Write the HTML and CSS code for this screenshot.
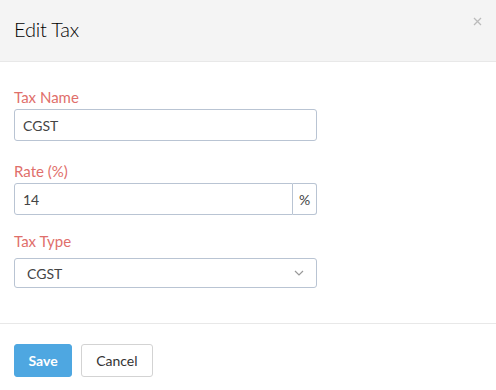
FILE: index.html
```html
<!DOCTYPE html>
<html lang="en">
<head>
    <meta charset="UTF-8">
    <meta name="viewport" content="width=device-width, initial-scale=1.0">
    <title>Edit Tax</title>
    <link rel="stylesheet" href="styles.css">
</head>
<body>
    <div class="modal">
        <div class="modal-header">
            <h1>Edit Tax</h1>
            <svg class="close" width="9" height="9" viewBox="0 0 9 9"><path d="M1 1l7 7M8 1l-7 7" stroke="#bbb" stroke-width="1.3"/></svg>
        </div>

        <div class="modal-body">
            <div class="form-group">
                <label for="tax-name">Tax Name</label>
                <input type="text" id="tax-name" value="CGST">
            </div>

            <div class="form-group">
                <label for="tax-rate">Rate (%)</label>
                <div class="input-group">
                    <input type="text" id="tax-rate" value="14">
                    <span class="addon">%</span>
                </div>
            </div>

            <div class="form-group type-group">
                <label for="tax-type">Tax Type</label>
                <div class="select">
                    <span>CGST</span>
                    <svg width="10" height="6" viewBox="0 0 10 6"><path d="M1 1l4 4 4-4" fill="none" stroke="#999" stroke-width="1.2"/></svg>
                </div>
            </div>
        </div>

        <div class="modal-footer">
            <button class="btn btn-primary">Save</button>
            <button class="btn">Cancel</button>
        </div>
    </div>
</body>
</html>
```

FILE: styles.css
```css
body {
    font-family: Lato, "Open Sans", Arial, sans-serif;
    margin: 0;
    background-color: white;
    color: #333;
}
.modal-header {
    position: relative;
    background-color: #f4f4f4;
    border-bottom: 1px solid #e8e8e8;
    padding: 17px 14px 0;
    box-sizing: border-box;
    height: 62px;
}
h1 {
    margin: 0;
    font-size: 20px;
    line-height: 24px;
    font-weight: 300;
    letter-spacing: -0.2px;
    color: #000;
}
.close {
    position: absolute;
    top: 17px;
    right: 14px;
}
.modal-body {
    padding: 26px 14px 35px;
}
.form-group {
    width: 303px;
    margin-bottom: 21px;
}
.form-group.type-group {
    margin-top: -4px;
    margin-bottom: 0;
}
label {
    display: block;
    margin-bottom: 3px;
    font-size: 15px;
    line-height: 18px;
    color: #df6f6b;
}
.type-group label {
    margin-bottom: 8px;
}
input[type="text"] {
    width: 100%;
    height: 32px;
    padding: 0 8px;
    border: 1px solid #b9c4d3;
    border-radius: 3px;
    box-sizing: border-box;
    font-family: inherit;
    font-size: 14px;
    color: #444;
}
.input-group {
    display: flex;
}
.input-group input[type="text"] {
    flex: 1;
    border-radius: 3px 0 0 3px;
}
.addon {
    width: 24px;
    height: 32px;
    box-sizing: border-box;
    border: 1px solid #b9c4d3;
    border-left: none;
    border-radius: 0 3px 3px 0;
    display: flex;
    align-items: center;
    justify-content: center;
    font-size: 14px;
    color: #444;
}
.select {
    height: 28px;
    padding: 0 12px;
    border: 1px solid #b9c4d3;
    border-radius: 3px;
    display: flex;
    align-items: center;
    justify-content: space-between;
    font-size: 14px;
    color: #444;
}
.modal-footer {
    border-top: 1px solid #e8e8e8;
    padding: 20px 14px;
    display: flex;
    gap: 9px;
}
.btn {
    height: 33px;
    padding: 0 14px;
    border: 1px solid #d3d3d3;
    border-radius: 3px;
    background-color: white;
    font-family: inherit;
    font-size: 14px;
    color: #333;
}
.btn-primary {
    padding: 0 13.5px;
    background-color: #4ea7e1;
    border-color: #4ea7e1;
    color: white;
    font-weight: bold;
}
```
